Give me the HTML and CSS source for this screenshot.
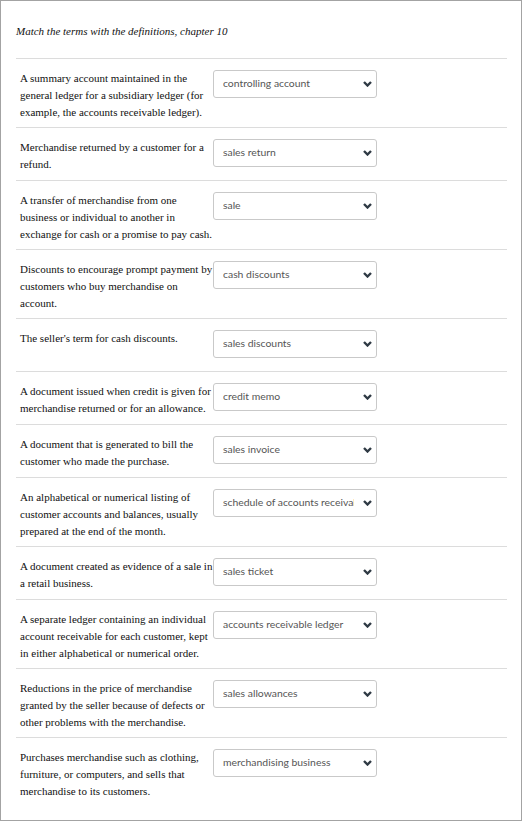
FILE: index.html
```html
<!DOCTYPE html>
<html>
<head>
<meta charset="utf-8">
<link rel="stylesheet" href="styles.css">
</head>
<body>
<div class="frame">
  <p class="title">Match the terms with the definitions, chapter 10</p>
  <div class="list">
    <div class="row">
      <div class="def">A summary account maintained in the general ledger for a subsidiary ledger (for example, the accounts receivable ledger).</div>
      <div class="select"><span class="val">controlling account</span><svg class="chev" width="9" height="6" viewBox="0 0 9 6"><polyline points="1,1 4.5,4.5 8,1"/></svg></div>
    </div>
    <div class="row">
      <div class="def">Merchandise returned by a customer for a refund.</div>
      <div class="select"><span class="val">sales return</span><svg class="chev" width="9" height="6" viewBox="0 0 9 6"><polyline points="1,1 4.5,4.5 8,1"/></svg></div>
    </div>
    <div class="row">
      <div class="def">A transfer of merchandise from one business or individual to another in exchange for cash or a promise to pay cash.</div>
      <div class="select"><span class="val">sale</span><svg class="chev" width="9" height="6" viewBox="0 0 9 6"><polyline points="1,1 4.5,4.5 8,1"/></svg></div>
    </div>
    <div class="row">
      <div class="def">Discounts to encourage prompt payment by customers who buy merchandise on account.</div>
      <div class="select"><span class="val">cash discounts</span><svg class="chev" width="9" height="6" viewBox="0 0 9 6"><polyline points="1,1 4.5,4.5 8,1"/></svg></div>
    </div>
    <div class="row">
      <div class="def">The seller's term for cash discounts.</div>
      <div class="select"><span class="val">sales discounts</span><svg class="chev" width="9" height="6" viewBox="0 0 9 6"><polyline points="1,1 4.5,4.5 8,1"/></svg></div>
    </div>
    <div class="row">
      <div class="def">A document issued when credit is given for merchandise returned or for an allowance.</div>
      <div class="select"><span class="val">credit memo</span><svg class="chev" width="9" height="6" viewBox="0 0 9 6"><polyline points="1,1 4.5,4.5 8,1"/></svg></div>
    </div>
    <div class="row">
      <div class="def">A document that is generated to bill the customer who made the purchase.</div>
      <div class="select"><span class="val">sales invoice</span><svg class="chev" width="9" height="6" viewBox="0 0 9 6"><polyline points="1,1 4.5,4.5 8,1"/></svg></div>
    </div>
    <div class="row">
      <div class="def">An alphabetical or numerical listing of customer accounts and balances, usually prepared at the end of the month.</div>
      <div class="select"><span class="val">schedule of accounts receivable</span><svg class="chev" width="9" height="6" viewBox="0 0 9 6"><polyline points="1,1 4.5,4.5 8,1"/></svg></div>
    </div>
    <div class="row">
      <div class="def">A document created as evidence of a sale in a retail business.</div>
      <div class="select"><span class="val">sales ticket</span><svg class="chev" width="9" height="6" viewBox="0 0 9 6"><polyline points="1,1 4.5,4.5 8,1"/></svg></div>
    </div>
    <div class="row">
      <div class="def">A separate ledger containing an individual account receivable for each customer, kept in either alphabetical or numerical order.</div>
      <div class="select"><span class="val">accounts receivable ledger</span><svg class="chev" width="9" height="6" viewBox="0 0 9 6"><polyline points="1,1 4.5,4.5 8,1"/></svg></div>
    </div>
    <div class="row">
      <div class="def">Reductions in the price of merchandise granted by the seller because of defects or other problems with the merchandise.</div>
      <div class="select"><span class="val">sales allowances</span><svg class="chev" width="9" height="6" viewBox="0 0 9 6"><polyline points="1,1 4.5,4.5 8,1"/></svg></div>
    </div>
    <div class="row">
      <div class="def">Purchases merchandise such as clothing, furniture, or computers, and sells that merchandise to its customers.</div>
      <div class="select"><span class="val">merchandising business</span><svg class="chev" width="9" height="6" viewBox="0 0 9 6"><polyline points="1,1 4.5,4.5 8,1"/></svg></div>
    </div>
  </div>
</div>
</body>
</html>
```
FILE: styles.css
```css
html, body {
  margin: 0;
  padding: 0;
  background: #fff;
}
.frame {
  box-sizing: border-box;
  width: 522px;
  height: 821px;
  border: 1px solid #a3a3a3;
  padding: 0 14px 0 15px;
  font-family: "Liberation Serif", "Times New Roman", serif;
  color: #111;
}
.title {
  margin: 0;
  padding: 23px 0 20px 0;
  font-style: italic;
  font-size: 11px;
  line-height: 14px;
}
.row {
  display: flex;
  align-items: flex-start;
  border-top: 1px solid #dcdcdc;
  padding: 11px 0 6px 4px;
}
.def {
  width: 193px;
  font-size: 11px;
  line-height: 17px;
}
.select {
  box-sizing: border-box;
  width: 164px;
  height: 28px;
  margin-bottom: 7px;
  border: 1px solid #c9c9c9;
  border-radius: 3px;
  display: flex;
  align-items: center;
  padding: 0 4px 0 9px;
  font-family: Lato, "Open Sans", sans-serif;
  font-size: 10.4px;
  color: #555;
  background: #fff;
}
.val {
  flex: 1;
  min-width: 0;
  overflow: hidden;
  white-space: nowrap;
  margin-right: 9px;
  padding-bottom: 2px;
}
.chev {
  flex: none;
}
.chev polyline {
  fill: none;
  stroke: #2f3a44;
  stroke-width: 2.4;
  stroke-linecap: butt;
  stroke-linejoin: miter;
}
```
